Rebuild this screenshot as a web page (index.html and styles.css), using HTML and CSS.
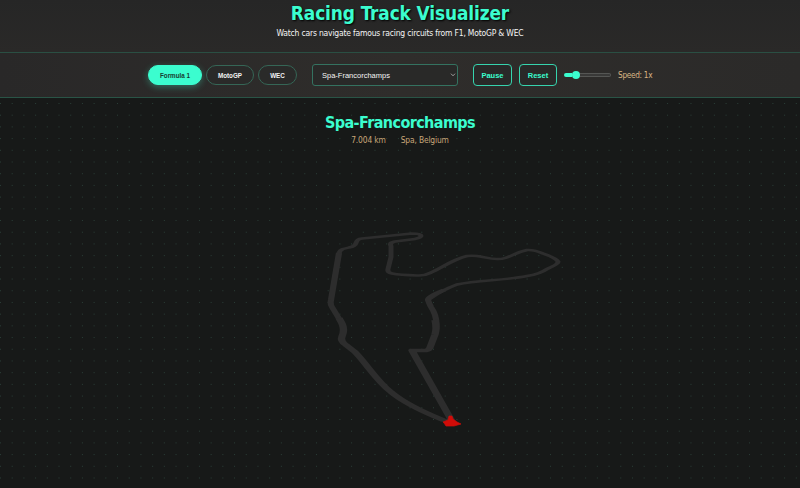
FILE: index.html
```html
<!DOCTYPE html>
<html lang="en">
<head>
<meta charset="utf-8">
<title>Racing Track Visualizer</title>
<link rel="stylesheet" href="styles.css">
</head>
<body>
<header class="header">
  <h1>Racing Track Visualizer</h1>
  <p>Watch cars navigate famous racing circuits from F1, MotoGP &amp; WEC</p>
</header>
<nav class="controls">
  <div class="tabs">
    <button class="tab active f1">Formula 1</button>
    <button class="tab moto">MotoGP</button>
    <button class="tab wec">WEC</button>
  </div>
  <div class="select"><span>Spa-Francorchamps</span>
    <svg width="6" height="4" viewBox="0 0 6 4"><path d="M1 .7 3 2.8 5 .7"/></svg>
  </div>
  <div class="actions">
    <button class="action pause">Pause</button>
    <button class="action reset">Reset</button>
    <div class="slider"><div class="fill"></div><div class="thumb"></div><div class="rest"></div></div>
    <span class="speed">Speed: 1x</span>
  </div>
</nav>
<main class="stage">
  <h2>Spa-Francorchamps</h2>
  <div class="info"><span class="km">7.004 km</span><span class="place">Spa, Belgium</span></div>
  <svg class="track" width="300" height="240" viewBox="0 0 300 240">
    <g transform="scale(1 .5)">
      <path stroke-width="5" d="M128 160Q142 140 157 129C178 120 204 121 227 112Q240 108 247 98Q259 88 258 83Q256 76 243 67Q234 59 227 60C213 66 208 79 197 78C186 78 180 69 167 72C154 78 143 94 130 106Q124 112 117 111Q100 110 92 107Q87 105 88 98L91 74V52Q89 45 95 43L115 38Q121 35 121 32Q121 27 112 27L62 37Q57 38 56 46Q55 53 49 55L43 58Q40 60 39 66L31 160"/>
      <path stroke-width="6.2" d="M39 66L31 160Q30 168 32 174L42 207Q44 214 43 221M144 140Q127 154 128 160Q129 166 131 174Q138 194 136 220"/>
      <path stroke-width="7.4" d="M39 196L42 207Q45 220 42 233Q40 242 46 250L55 264C66 286 77 323 91 344C104 366 122 383 143 400L153 406L112 261H126Q129 260 130 255L135 229Q137 216 135 200"/>
    </g>
    <path class="car" d="M143 202 148 200 149 196 152 196 153 199 157 202 161 204 154 206 146 206 144 203Z"/>
  </svg>
</main>
</body>
</html>
```
FILE: styles.css
```css
* { box-sizing: border-box; }
body {
  margin: 0;
  height: 488px;
  overflow: hidden;
  display: flex;
  flex-direction: column;
  background: #171918;
  color: #f4f4f4;
  font-family: "DejaVu Sans Condensed", "DejaVu Sans", sans-serif;
  font-stretch: condensed;
}
h1, h2, p { margin: 0; text-align: center; white-space: nowrap; }
.header {
  height: 53px;
  padding-top: 2px;
  background: linear-gradient(#262626, #2a2928);
  border-bottom: 1px solid #2a4f43;
}
h1 {
  font-size: 18.9px;
  line-height: 23px;
  letter-spacing: -.12px;
  color: #3bfdcf;
  text-shadow: 1px 1px 2px #000;
}
.header p { font-size: 8.5px; line-height: 16px; letter-spacing: -.2px; }
.controls {
  height: 45px;
  display: flex;
  align-items: center;
  justify-content: center;
  gap: 15px;
  background: linear-gradient(90deg, #292828, #2f2d2b 50%, #2b2a29);
  border-bottom: 1px solid #295446;
}
.tabs, .actions { display: flex; align-items: center; }
.tabs { gap: 4px; }
button { padding: 0; font-family: "Liberation Sans", Arial, sans-serif; font-weight: bold; }
.tab {
  height: 20px;
  border: 1px solid #356656;
  border-radius: 10px;
  background: #2a2a29;
  color: #f3f3f3;
  font-size: 6.3px;
}
.f1 { width: 54px; }
.moto { width: 48px; }
.wec { width: 39px; }
.active {
  background: #3bfdcf;
  border-color: #3bfdcf;
  color: #173c31;
  box-shadow: 0 2px 7px #3bfdcf55;
}
.select {
  width: 146px;
  height: 22px;
  padding: 0 1px 0 9px;
  display: flex;
  align-items: center;
  justify-content: space-between;
  border: 1px solid #347260;
  border-radius: 3px;
  background: #292928;
  font: 7.5px "Liberation Sans", Arial, sans-serif;
}
.select svg { fill: none; stroke: #bbb; stroke-width: .8; }
.actions { gap: 7px; }
.action {
  height: 22px;
  border: 1.5px solid #36d4ae;
  border-radius: 4px;
  background: #292928;
  color: #3bfdcf;
  font-size: 7.5px;
}
.pause { width: 39px; }
.reset { width: 38px; }
.slider { width: 47px; display: flex; align-items: center; }
.fill { width: 8px; height: 4px; border-radius: 2px 0 0 2px; background: #3bfdcf; }
.thumb { width: 8px; height: 8px; border-radius: 50%; background: #3bfdcf; }
.rest { flex: 1; height: 4px; border: 1px solid #555654; border-left: 0; border-radius: 0 2px 2px 0; background: #393938; }
.speed { width: 34px; font-size: 8.2px; letter-spacing: -.3px; color: #d9b584; white-space: nowrap; }
.stage {
  flex: 1;
  padding-top: 14px;
  background: radial-gradient(circle at .5px .5px, #2a3e37 .6px, transparent .9px) 0 5px / 11.71px 11.71px, #171918;
}
h2 { font-size: 16px; line-height: 22px; letter-spacing: -.6px; color: #3bfdcf; }
.info {
  display: flex;
  justify-content: center;
  gap: 15px;
  font-size: 8.4px;
  line-height: 12px;
  letter-spacing: -.15px;
  color: #c9a779;
}
.track { display: block; margin: 74px 0 0 300px; fill: none; stroke: #2d2d2d; stroke-linejoin: round; }
.track .car { fill: #d00c08; stroke: #d00c08; stroke-width: .7; }
```
